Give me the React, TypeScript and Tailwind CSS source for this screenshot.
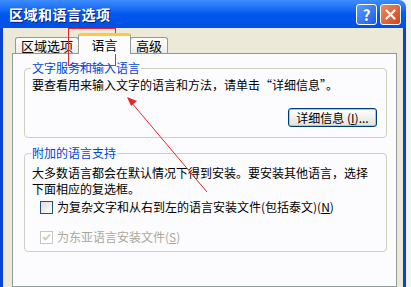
import React from 'react'

const font = {fontFamily: '"Noto Sans CJK SC", "Noto Sans", sans-serif'}

function Tab({label, active}: {label: string; active?: boolean}) {
  if (active) {
    return (
      <div className="relative -mx-[1px] z-10 h-[21px] w-[53px] flex items-start justify-center pt-[1px] bg-[#fcfcfe] border-x border-[#919b9c] rounded-t-[3px] border-t-[3px] border-t-[#ffc83c] text-[13px] leading-[16px]">
        {label}
      </div>
    )
  }
  return (
    <div className="mt-[4px] h-[17px] px-[5px] flex items-center justify-center bg-gradient-to-b from-white to-[#ecebe6] border-x border-t border-[#919b9c] rounded-t-[3px] text-[13px] leading-[16px]">
      {label}
    </div>
  )
}

function Checkbox({checked, disabled}: {checked?: boolean; disabled?: boolean}) {
  return (
    <span
      className={`inline-flex h-[13px] w-[13px] shrink-0 items-center justify-center border ${
        disabled ? 'border-[#cac8bb] bg-white' : 'border-[#1c5180] bg-gradient-to-br from-[#dcdcd7] to-white'
      }`}
    >
      {checked && (
        <svg width="9" height="9" viewBox="0 0 9 9">
          <path d="M1 4 L3.5 6.5 L8 1.5" fill="none" stroke={disabled ? '#cac8bb' : '#21a121'} strokeWidth="1.8" />
        </svg>
      )}
    </span>
  )
}

export default function App() {
  return (
    <div className="w-[411px] h-[287px] overflow-hidden flex bg-[#f2f4f8] text-black" style={font}>
      <div className="w-[406px] flex flex-col shrink-0">
        {/* title bar */}
        <div className="h-[28px] shrink-0 flex items-center pl-[9px] pr-[5px] rounded-tr-[7px] bg-gradient-to-b from-[#3d8dff] via-[#0058ee] to-[#0050e4]">
          <span className="text-white font-bold text-[14px] leading-none tracking-[0.5px] [text-shadow:1px_1px_0_#0a1e7a]">
            区域和语言选项
          </span>
          <div className="flex-1" />
          <div className="h-[21px] w-[21px] rounded-[3px] border border-white bg-gradient-to-br from-[#5b9bff] to-[#1b5ce6] flex items-center justify-center text-white font-bold text-[15px] leading-none">
            ?
          </div>
          <div className="ml-[3px] h-[21px] w-[21px] rounded-[3px] border border-white bg-gradient-to-br from-[#e98a62] to-[#d2401a] flex items-center justify-center">
            <svg width="11" height="11" viewBox="0 0 11 11">
              <path d="M1.5 1.5 L9.5 9.5 M9.5 1.5 L1.5 9.5" stroke="white" strokeWidth="2.2" strokeLinecap="round" />
            </svg>
          </div>
        </div>

        {/* body */}
        <div className="flex-1 flex flex-col bg-[#ece9d8] border-l-[3px] border-r-[3px] border-[#0843d4] pl-[9px] pr-[6px] pt-[5px]">
          <div className="flex pl-[3px] items-end">
            <Tab label="区域选项" />
            <Tab label="语言" active />
            <Tab label="高级" />
          </div>
          <div className="-mt-[1px] flex-1 bg-[#fcfcfe] border border-[#919b9c] pl-[11px] pr-[9px] pt-[6px] text-[12px] leading-[16px]">
            <fieldset className="border border-[#d0d0bf] rounded-[4px] pl-[7px] pr-[9px] pb-[10px]">
              <legend className="px-[1px] -ml-[1px] text-[#0046d5] text-[12px] leading-[16px]">文字服务和输入语言</legend>
              <div className="pt-[1px]">要查看用来输入文字的语言和方法，请单击“详细信息”。</div>
              <div className="flex justify-end mt-[15px]">
                <div className="h-[19px] w-[89px] rounded-[3px] border border-[#003c74] bg-gradient-to-b from-white to-[#e3e3db] shadow-[inset_0_0_0_1px_#a7c3f0] flex items-center justify-center text-[12px] leading-none">
                  详细信息 (<span className="underline">I</span>)...
                </div>
              </div>
            </fieldset>

            <fieldset className="mt-[7px] border border-[#d0d0bf] rounded-[4px] pl-[7px] pr-[9px] pb-[6px]">
              <legend className="px-[1px] -ml-[1px] text-[#0046d5] text-[12px] leading-[16px]">附加的语言支持</legend>
              <div className="pt-[4px]">
                大多数语言都会在默认情况下得到安装。要安装其他语言，选择
                <br />
                下面相应的复选框。
              </div>
              <div className="mt-[2px] ml-[8px] flex items-center gap-[4px] h-[16px]">
                <Checkbox />
                <span>
                  为复杂文字和从右到左的语言安装文件(包括泰文)(<span className="underline">N</span>)
                </span>
              </div>
              <div className="mt-[14px] ml-[8px] flex items-center gap-[4px] h-[16px] text-[#aca899]">
                <Checkbox checked disabled />
                <span>
                  为东亚语言安装文件(<span className="underline">S</span>)
                </span>
              </div>
            </fieldset>
          </div>
        </div>
      </div>

      {/* annotation overlay */}
      <svg className="absolute left-0 top-0 pointer-events-none" width="411" height="287" viewBox="0 0 411 287">
        <rect x="68.5" y="28.5" width="47" height="37" fill="none" stroke="#e8262a" strokeWidth="1" />
        <line x1="207" y1="192" x2="131" y2="102" stroke="#e8262a" strokeWidth="1" />
        <path d="M127 97 L137 101 L131 106 Z" fill="#e8262a" />
      </svg>
    </div>
  )
}
